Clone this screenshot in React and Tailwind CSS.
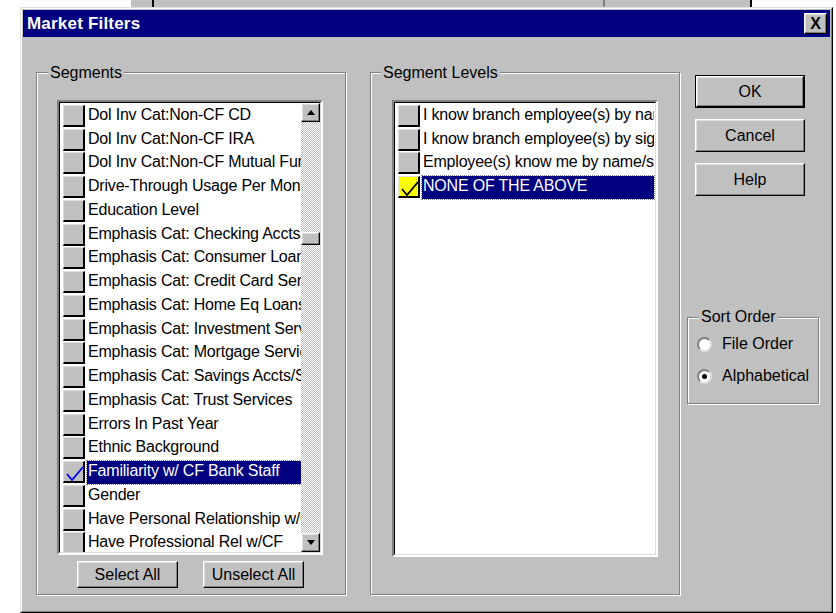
import { useState } from "react";

const segments = [
  "Dol Inv Cat:Non-CF CD",
  "Dol Inv Cat:Non-CF IRA",
  "Dol Inv Cat:Non-CF Mutual Funds",
  "Drive-Through Usage Per Month",
  "Education Level",
  "Emphasis Cat: Checking Accts",
  "Emphasis Cat: Consumer Loans",
  "Emphasis Cat: Credit Card Services",
  "Emphasis Cat: Home Eq Loans",
  "Emphasis Cat: Investment Services",
  "Emphasis Cat: Mortgage Services",
  "Emphasis Cat: Savings Accts/Sav",
  "Emphasis Cat: Trust Services",
  "Errors In Past Year",
  "Ethnic Background",
  "Familiarity w/ CF Bank Staff",
  "Gender",
  "Have Personal Relationship w/CF",
  "Have Professional Rel w/CF",
];

const levels = [
  "I know branch employee(s) by name",
  "I know branch employee(s) by sight",
  "Employee(s) know me by name/sight",
  "NONE OF THE ABOVE",
];

const raised =
  "bg-[#c0c0c0] border border-t-white border-l-white border-r-black border-b-black shadow-[inset_-1px_-1px_0_#808080,inset_1px_1px_0_#dfdfdf]";

const etched = "border border-[#808080] shadow-[inset_1px_1px_0_#fff,1px_1px_0_#fff]";

function Check({ color }) {
  return (
    <svg width="20" height="20" viewBox="0 0 20 20" className="absolute left-[1px] top-[1px]">
      <polyline points="2,11 7,17 18,4" fill="none" stroke={color} strokeWidth="1.8" />
    </svg>
  );
}

function Row({ label, checked, selected, checkBg = "bg-[#c0c0c0]", checkColor = "#0000ff" }) {
  return (
    <div className="flex h-[23.75px] items-center pl-[3px]">
      <div
        className={`relative h-[22px] w-[22px] shrink-0 border border-t-[#dfdfdf] border-l-[#dfdfdf] border-r-2 border-b-2 border-r-black border-b-black ${checkBg}`}
      >
        {checked && <Check color={checkColor} />}
      </div>
      <div
        className={`ml-[2px] flex h-[23px] flex-1 items-center overflow-hidden whitespace-nowrap pb-[2px] pl-px tracking-[-0.2px] ${
          selected ? "bg-[#000080] text-white outline outline-1 outline-dotted outline-[#808080]" : "text-black"
        }`}
      >
        {label}
      </div>
    </div>
  );
}

function Sunken({ className, children }) {
  return (
    <div className={`border-2 border-t-[#808080] border-l-[#808080] border-r-white border-b-white ${className}`}>
      <div className="flex h-full w-full border border-t-black border-l-black border-r-[#dfdfdf] border-b-[#dfdfdf] bg-white">
        {children}
      </div>
    </div>
  );
}

function Arrow({ up }) {
  return (
    <div className={`${raised} flex h-[19px] w-full items-center justify-center`}>
      <svg width="8" height="5" viewBox="0 0 8 5">
        <polygon points={up ? "0,5 8,5 4,0" : "0,0 8,0 4,5"} fill="#000" />
      </svg>
    </div>
  );
}

function Button({ children, className = "", isDefault }) {
  const inner = (
    <button className={`${raised} flex h-full w-full items-center justify-center text-black`}>{children}</button>
  );
  if (isDefault) {
    return <div className={`border border-black ${className}`}>{inner}</div>;
  }
  return <div className={className}>{inner}</div>;
}

function Radio({ label, on, onClick }) {
  return (
    <div className="flex items-center" onClick={onClick}>
      <div className="flex h-[15px] w-[15px] items-center justify-center rounded-full border-2 border-t-[#808080] border-l-[#808080] border-r-[#dfdfdf] border-b-[#dfdfdf] bg-white">
        {on && <div className="h-[5px] w-[5px] rounded-full bg-black" />}
      </div>
      <span className="ml-[10px]">{label}</span>
    </div>
  );
}

export default function App() {
  const [sort, setSort] = useState("alpha");

  return (
    <div className="h-[613px] w-[836px] overflow-hidden bg-white text-[16px] leading-none text-black [font-family:'Liberation_Sans',Arial,sans-serif]">
      {/* window behind the dialog */}
      <div className="flex h-[7px]">
        <div className="w-[130px] bg-white" />
        <div className="w-[24px] border-l border-r-2 border-l-white border-r-black bg-[#c0c0c0]" />
        <div className="w-[451px] border-r-2 border-r-[#808080] bg-[#c0c0c0]" />
        <div className="w-[147px] border-r-2 border-r-black bg-[#c0c0c0]" />
        <div className="flex-1 bg-white" />
      </div>

      <div className="flex">
        <div className="w-[20px] shrink-0" />
        <div className="h-[606px] w-[813px] shrink-0 border border-t-[#dfdfdf] border-l-[#dfdfdf] border-r-black border-b-black">
          <div className="h-full w-full border border-t-white border-l-white border-r-[#808080] border-b-[#808080] bg-[#c0c0c0] p-px">
            {/* title bar */}
            <div className="flex h-[27px] items-center justify-between bg-[#000080] pl-[4px] pr-[3px]">
              <span className="text-[17px] font-bold tracking-[0.2px] text-white">Market Filters</span>
              <div className={`${raised} flex h-[21px] w-[23px] items-center justify-center text-[16px] font-bold`}>
                X
              </div>
            </div>

            <div className="flex pl-[13px] pt-[35px]">
              {/* Segments */}
              <div className={`relative flex h-[523px] w-[310px] flex-col pl-[20px] pt-[27px] ${etched}`}>
                <span className="absolute -top-[10px] left-[11px] bg-[#c0c0c0] px-[2px] leading-[20px]">Segments</span>
                <Sunken className="h-[455px] w-[266px]">
                  <div className="flex-1 overflow-hidden pt-px">
                    {segments.map((s) => (
                      <Row key={s} label={s} checked={s.startsWith("Familiarity")} selected={s.startsWith("Familiarity")} />
                    ))}
                  </div>
                  <div className="flex w-[19px] flex-col bg-[repeating-conic-gradient(#c0c0c0_0_25%,#ffffff_0_50%)] bg-[length:2px_2px]">
                    <Arrow up />
                    <div className="h-[110px]" />
                    <div className={`${raised} h-[13px] w-full`} />
                    <div className="flex-1" />
                    <Arrow />
                  </div>
                </Sunken>
                <div className="mt-[6px] flex gap-[25px] pl-[20px]">
                  <Button className="h-[27px] w-[101px]">Select All</Button>
                  <Button className="h-[27px] w-[101px]">Unselect All</Button>
                </div>
              </div>

              {/* Segment Levels */}
              <div className={`relative ml-[24px] h-[523px] w-[310px] pl-[21px] pt-[27px] ${etched}`}>
                <span className="absolute -top-[10px] left-[10px] bg-[#c0c0c0] px-[2px] leading-[20px]">
                  Segment Levels
                </span>
                <Sunken className="h-[457px] w-[266px]">
                  <div className="flex-1 overflow-hidden pr-px pt-px">
                    {levels.map((l) => (
                      <Row
                        key={l}
                        label={l}
                        checked={l.startsWith("NONE")}
                        selected={l.startsWith("NONE")}
                        checkBg={l.startsWith("NONE") ? "bg-[#ffff00]" : "bg-[#c0c0c0]"}
                        checkColor="#000"
                      />
                    ))}
                  </div>
                </Sunken>
              </div>

              {/* buttons and sort order */}
              <div className="ml-[7px] flex w-[132px] flex-col pt-[3px]">
                <div className="flex flex-col gap-[11px] pl-[8px]">
                  <Button isDefault className="h-[33px] w-[110px]">OK</Button>
                  <Button className="h-[33px] w-[110px]">Cancel</Button>
                  <Button className="h-[33px] w-[110px]">Help</Button>
                </div>
                <div className={`relative mt-[121px] flex h-[87px] w-[132px] flex-col gap-[16px] pl-[9px] pt-[18px] ${etched}`}>
                  <span className="absolute -top-[11px] left-[11px] bg-[#c0c0c0] px-[2px] leading-[20px]">Sort Order</span>
                  <Radio label="File Order" on={sort === "file"} onClick={() => setSort("file")} />
                  <Radio label="Alphabetical" on={sort === "alpha"} onClick={() => setSort("alpha")} />
                </div>
              </div>
            </div>
          </div>
        </div>
      </div>
    </div>
  );
}
